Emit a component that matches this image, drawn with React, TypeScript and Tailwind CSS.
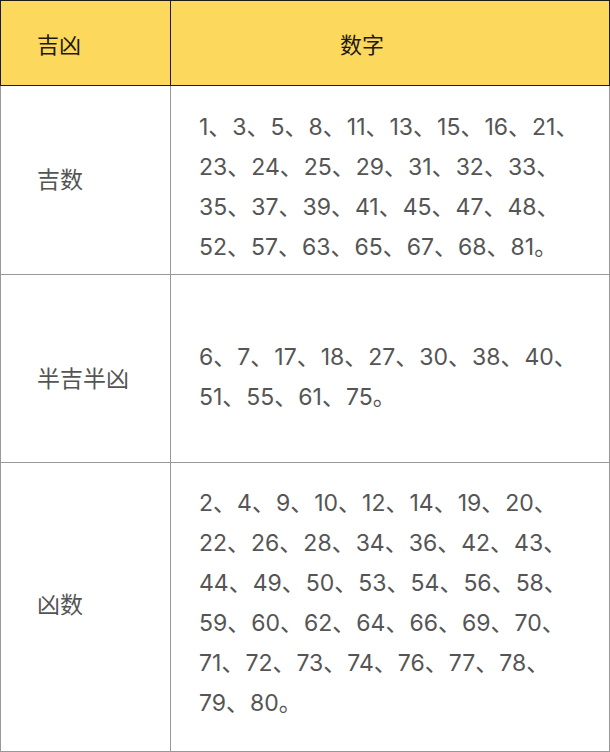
import React from "react";

const rows = [
  {
    label: "吉数",
    h: "h-[189px]",
    pt: "pt-[19px]",
    lpad: "pb-[4px]",
    lines: [
      "1、3、5、8、11、13、15、16、21、",
      "23、24、25、29、31、32、33、",
      "35、37、39、41、45、47、48、",
      "52、57、63、65、67、68、81。",
    ],
  },
  {
    label: "半吉半凶",
    h: "h-[188px]",
    pt: "pt-[60px]",
    lpad: "pt-[17px]",
    lines: ["6、7、17、18、27、30、38、40、", "51、55、61、75。"],
  },
  {
    label: "凶数",
    h: "h-[289px]",
    pt: "pt-[18px]",
    lpad: "pb-[8px]",
    lines: [
      "2、4、9、10、12、14、19、20、",
      "22、26、28、34、36、42、43、",
      "44、49、50、53、54、56、58、",
      "59、60、62、64、66、69、70、",
      "71、72、73、74、76、77、78、",
      "79、80。",
    ],
  },
];

function Line({ text }: { text: string }) {
  const parts = text.match(/\d+|、|。/g) || [];
  return (
    <div className="whitespace-nowrap h-[40px] leading-[40px]">
      {parts.map((p, i) =>
        /\d/.test(p) ? (
          <span key={i} className="font-['Inter','Liberation_Sans',sans-serif]">
            {p}
          </span>
        ) : (
          <span key={i} className="font-['Noto_Sans_CJK_SC',sans-serif] mr-[1px]">
            {p}
          </span>
        )
      )}
    </div>
  );
}

export default function App() {
  return (
    <div className="w-[610px] h-[752px] bg-white font-['Liberation_Sans','Noto_Sans_CJK_SC',sans-serif]">
      <div className="flex h-[86px] border border-[#1e1a14] bg-[#fcd95c] text-[22px] text-[#1e1a14] font-['Noto_Sans_CJK_SC',sans-serif]">
        <div className="w-[170px] border-r border-[#1e1a14] flex items-center pl-[36px]">吉凶</div>
        <div className="flex-1 flex items-center pl-[169px]">数字</div>
      </div>
      {rows.map((r) => (
        <div key={r.label} className={`flex ${r.h} border-x border-b border-[#999999] text-[#555555]`}>
          <div
            className={`w-[170px] shrink-0 border-r border-[#999999] flex items-center pl-[36px] text-[23px] font-['Noto_Sans_CJK_SC',sans-serif] ${r.lpad}`}
          >
            {r.label}
          </div>
          <div className={`flex-1 pl-[28px] text-[23px] ${r.pt}`}>
            {r.lines.map((l, i) => (
              <Line key={i} text={l} />
            ))}
          </div>
        </div>
      ))}
    </div>
  );
}
